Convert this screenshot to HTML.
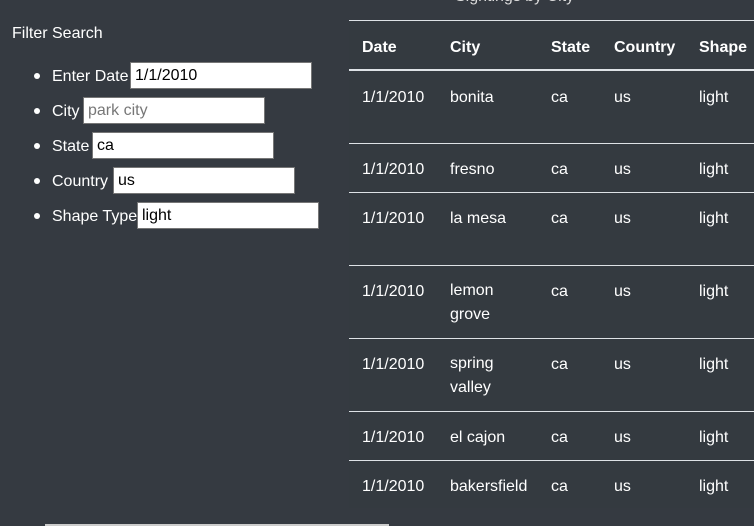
<!DOCTYPE html>
<html><head><style>
html,body{margin:0;padding:0;background:#353a41;width:754px;height:526px;overflow:hidden;font-family:"Liberation Sans","DejaVu Sans",sans-serif;color:#fff;}
.a{position:absolute;white-space:nowrap;font-size:16px;margin-top:2px;}
.t{position:absolute;left:349px;top:20px;width:420px;height:488px;background:#343a40;}
.l{position:absolute;left:349px;width:420px;height:1px;background:#dee2e6;}
.h{font-weight:bold;}
.inp{position:absolute;height:27px;background:#fff;border:1px solid #767676;box-sizing:border-box;color:#000;font-size:16px;line-height:25px;padding-left:4px;margin-top:1px;}
.dot{position:absolute;width:6px;height:6px;border-radius:3px;background:#fff;}
</style></head><body>
<div class="t"></div>
<div class="a" style="left:455px;top:-14px;color:#ddd">Sightings by City</div>
<div class="l" style="top:20px"></div>
<div class="l" style="top:69px;height:2px"></div>
<div class="l" style="top:143px"></div>
<div class="l" style="top:192px"></div>
<div class="l" style="top:265px"></div>
<div class="l" style="top:338px"></div>
<div class="l" style="top:411px"></div>
<div class="l" style="top:460px"></div>

<div class="a h" style="left:362px;top:37px">Date</div>
<div class="a h" style="left:450px;top:37px">City</div>
<div class="a h" style="left:551px;top:37px">State</div>
<div class="a h" style="left:614px;top:37px">Country</div>
<div class="a h" style="left:699px;top:37px">Shape</div>

<div class="a" style="left:362px;top:87px">1/1/2010</div><div class="a" style="left:450px;top:87px">bonita</div><div class="a" style="left:551px;top:87px">ca</div><div class="a" style="left:614px;top:87px">us</div><div class="a" style="left:699px;top:87px">light</div>
<div class="a" style="left:362px;top:159px">1/1/2010</div><div class="a" style="left:450px;top:159px">fresno</div><div class="a" style="left:551px;top:159px">ca</div><div class="a" style="left:614px;top:159px">us</div><div class="a" style="left:699px;top:159px">light</div>
<div class="a" style="left:362px;top:208px">1/1/2010</div><div class="a" style="left:450px;top:208px">la mesa</div><div class="a" style="left:551px;top:208px">ca</div><div class="a" style="left:614px;top:208px">us</div><div class="a" style="left:699px;top:208px">light</div>
<div class="a" style="left:362px;top:281px">1/1/2010</div><div class="a" style="left:450px;line-height:24px;top:277px">lemon<br>grove</div><div class="a" style="left:551px;top:281px">ca</div><div class="a" style="left:614px;top:281px">us</div><div class="a" style="left:699px;top:281px">light</div>
<div class="a" style="left:362px;top:354px">1/1/2010</div><div class="a" style="left:450px;top:350px;line-height:24px">spring<br>valley</div><div class="a" style="left:551px;top:354px">ca</div><div class="a" style="left:614px;top:354px">us</div><div class="a" style="left:699px;top:354px">light</div>
<div class="a" style="left:362px;top:427px">1/1/2010</div><div class="a" style="left:450px;top:427px">el cajon</div><div class="a" style="left:551px;top:427px">ca</div><div class="a" style="left:614px;top:427px">us</div><div class="a" style="left:699px;top:427px">light</div>
<div class="a" style="left:362px;top:476px">1/1/2010</div><div class="a" style="left:450px;top:476px">bakersfield</div><div class="a" style="left:551px;top:476px">ca</div><div class="a" style="left:614px;top:476px">us</div><div class="a" style="left:699px;top:476px">light</div>

<div class="a" style="left:12px;top:23px">Filter Search</div>
<div class="dot" style="left:34px;top:73px"></div><div class="a" style="left:52px;top:66px">Enter Date</div><div class="inp" style="left:130px;top:61px;width:182px">1/1/2010</div>
<div class="dot" style="left:34px;top:108px"></div><div class="a" style="left:52px;top:101px">City</div><div class="inp" style="left:83px;top:96px;width:182px;color:#777">park city</div>
<div class="dot" style="left:34px;top:143px"></div><div class="a" style="left:52px;top:136px">State</div><div class="inp" style="left:92px;top:131px;width:182px">ca</div>
<div class="dot" style="left:34px;top:178px"></div><div class="a" style="left:52px;top:171px">Country</div><div class="inp" style="left:113px;top:166px;width:182px">us</div>
<div class="dot" style="left:34px;top:213px"></div><div class="a" style="left:52px;top:206px">Shape Type</div><div class="inp" style="left:137px;top:201px;width:182px">light</div>

<div style="position:absolute;left:45px;top:524px;width:344px;height:2px;background:#ccc"></div>
</body></html>
